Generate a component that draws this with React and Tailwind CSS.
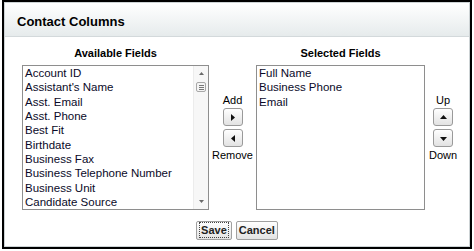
import React from 'react';

const available = [
  'Account ID',
  "Assistant's Name",
  'Asst. Email',
  'Asst. Phone',
  'Best Fit',
  'Birthdate',
  'Business Fax',
  'Business Telephone Number',
  'Business Unit',
  'Candidate Source',
];

const selected = ['Full Name', 'Business Phone', 'Email'];

function Arrow({ dir }) {
  const paths = {
    right: 'M3 1 L7 4.5 L3 8 Z',
    left: 'M7 1 L3 4.5 L7 8 Z',
    up: 'M1 6 L4.5 2 L8 6 Z',
    down: 'M1 3 L4.5 7 L8 3 Z',
  };
  return (
    <button className="w-[20px] h-[18px] flex items-center justify-center rounded-[3px] border border-[#9a9a9a] bg-gradient-to-b from-white to-[#e2e2e2]">
      <svg width="9" height="9" viewBox="0 0 9 9">
        <path d={paths[dir]} fill="#111" />
      </svg>
    </button>
  );
}

function Scrollbar() {
  return (
    <div className="w-[15px] h-full flex flex-col items-center bg-[#f7f7f7] border-l border-[#ececec]">
      <svg width="7" height="14" viewBox="0 0 7 14" className="mt-[1px]">
        <path d="M1 8 L3.5 5 L6 8 Z" fill="#6a6a6a" />
      </svg>
      <div className="w-[10px] h-[10px] mt-[1px] rounded-[2px] border border-[#a8a8a8] bg-[#f4f4f4] flex flex-col items-center justify-center gap-[1px]">
        <div className="w-[5px] h-px bg-[#777]" />
        <div className="w-[5px] h-px bg-[#777]" />
        <div className="w-[5px] h-px bg-[#777]" />
      </div>
      <div className="flex-1" />
      <svg width="7" height="14" viewBox="0 0 7 14" className="mb-[1px]">
        <path d="M1 6 L3.5 9 L6 6 Z" fill="#6a6a6a" />
      </svg>
    </div>
  );
}

function ListBox({ items, width, scroll }) {
  return (
    <div className={`h-[145px] border border-[#8e8e8e] bg-white flex ${width}`}>
      <ul className="flex-1 pl-[2px] text-[11.5px] leading-[14.33px] text-[#0a0a28] whitespace-nowrap overflow-hidden">
        {items.map((it) => (
          <li key={it}>{it}</li>
        ))}
      </ul>
      {scroll && <Scrollbar />}
    </div>
  );
}

export default function App() {
  return (
    <div className="w-[474px] h-[251px] bg-white font-['Liberation_Sans',Arial,sans-serif] text-black">
      <div className="ml-[2px] w-[470px] h-[249px] border-2 border-black bg-white">
        <div className="h-full border border-[#cdd3d5] flex flex-col">
          <div className="h-[34px] shrink-0 pl-[12px] pt-[5px] flex items-center bg-gradient-to-b from-white to-[#e6ebec] border-b border-[#d3d9db] text-[13px] font-bold">
            Contact Columns
          </div>

          <div className="flex pl-[17px] pt-[10px]">
            <div className="w-[187px] flex flex-col items-center">
              <div className="text-[11px] font-bold leading-[13px] mb-[5px]">Available Fields</div>
              <ListBox items={available} width="w-[187px]" scroll />
            </div>

            <div className="w-[47px] flex flex-col items-center pt-[47px] text-[11px] leading-[13px]">
              <div className="mb-[1px]">Add</div>
              <Arrow dir="right" />
              <div className="h-[3px]" />
              <Arrow dir="left" />
              <div className="mt-[2px]">Remove</div>
            </div>

            <div className="w-[169px] flex flex-col items-center">
              <div className="text-[11px] font-bold leading-[13px] mb-[5px]">Selected Fields</div>
              <ListBox items={selected} width="w-[169px]" />
            </div>

            <div className="w-[36px] flex flex-col items-center pt-[47px] text-[11px] leading-[13px]">
              <div className="mb-[1px]">Up</div>
              <Arrow dir="up" />
              <div className="h-[3px]" />
              <Arrow dir="down" />
              <div className="mt-[2px]">Down</div>
            </div>
          </div>

          <div className="flex justify-center gap-[4px] mt-[11px]">
            <button className="h-[19px] px-[2px] rounded-[2px] border border-[#a0a0a0] bg-gradient-to-b from-white to-[#e3e3e3] text-[11px] font-bold text-[#222]">
              <span className="px-[1px] py-[1px] border border-dotted border-[#444]">Save</span>
            </button>
            <button className="h-[19px] px-[2px] rounded-[2px] border border-[#a0a0a0] bg-gradient-to-b from-white to-[#e3e3e3] text-[11px] font-bold text-[#222]">
              Cancel
            </button>
          </div>
        </div>
      </div>
    </div>
  );
}
